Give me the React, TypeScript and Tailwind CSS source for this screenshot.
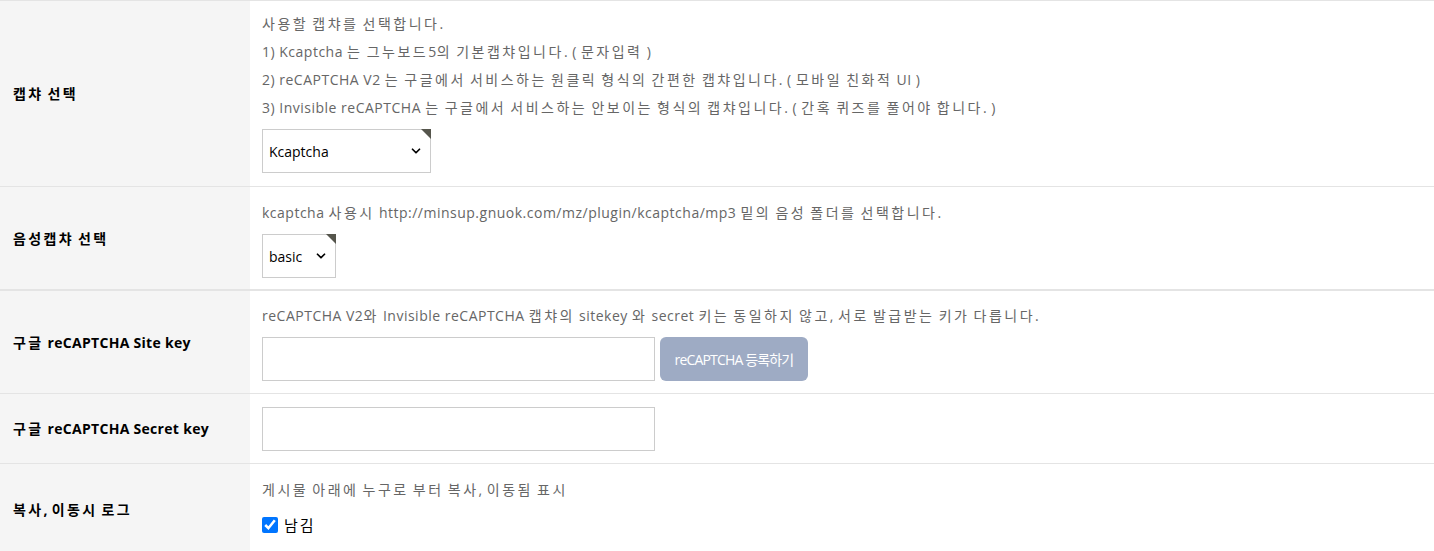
import React from "react";
import { ChevronDown } from "lucide-react";

const font = { fontFamily: '"Open Sans", "Noto Sans CJK KR", sans-serif' };

// hangul runs get their own spacing so the line widths match the original
const Ko = ({ t, hangul, latin = "" }: { t: string; hangul: string; latin?: string }) => (
  <>
    {t.split(/([\uAC00-\uD7A3]+)/).map((s, i) =>
      s ? (
        <span key={i} className={/[\uAC00-\uD7A3]/.test(s) ? hangul : latin}>
          {s}
        </span>
      ) : null
    )}
  </>
);

const Help = ({ t }: { t: string }) => (
  <p className="text-[14px] leading-[28px] text-[#666666]">
    <Ko t={t} hangul="tracking-[2.5px]" latin="tracking-[0.5px]" />
  </p>
);

const Select = ({ value, options, width }: { value: string; options: string[]; width: string }) => (
  <div className={`relative h-[44px] ${width}`}>
    <select
      defaultValue={value}
      className="appearance-none w-full h-full border border-[#cccccc] bg-white pl-[6px] pr-7 text-[14px] text-black outline-none"
    >
      {options.map((o) => (
        <option key={o}>{o}</option>
      ))}
    </select>
    <ChevronDown className="absolute right-[8px] top-[15px] w-[14px] h-[14px] pointer-events-none" strokeWidth={3} />
    <span className="absolute top-0 right-0 w-0 h-0 border-t-[10px] border-l-[10px] border-t-[#55554c] border-l-transparent" />
  </div>
);

const Row = ({
  label,
  children,
  border = "border-b border-[#e4e4e4]",
  className = "",
}: {
  label: string;
  children: React.ReactNode;
  border?: string;
  className?: string;
}) => (
  <div className={`grid grid-cols-[250px_1fr] ${border}`}>
    <div className="bg-[#f5f5f5] flex items-center px-[13px] text-[14px] font-bold text-black">
      <span>
        <Ko t={label} hangul="tracking-[2.4px]" latin="tracking-[0.3px]" />
      </span>
    </div>
    <div className={`px-3 ${className}`}>{children}</div>
  </div>
);

export default function App() {
  return (
    <div className="w-[1434px] h-[551px] overflow-hidden bg-white" style={font}>
      <div className="border-t border-[#e4e4e4]">
        <Row label="캡챠 선택" className="pt-[9px] pb-[13px]">
          <Help t="사용할 캡챠를 선택합니다." />
          <Help t="1) Kcaptcha 는 그누보드5의 기본캡챠입니다. ( 문자입력 )" />
          <Help t="2) reCAPTCHA V2 는 구글에서 서비스하는 원클릭 형식의 간편한 캡챠입니다. ( 모바일 친화적 UI )" />
          <Help t="3) Invisible reCAPTCHA 는 구글에서 서비스하는 안보이는 형식의 캡챠입니다. ( 간혹 퀴즈를 풀어야 합니다. )" />
          <div className="mt-[7px]">
            <Select value="Kcaptcha" options={["Kcaptcha", "reCAPTCHA V2", "Invisible reCAPTCHA"]} width="w-[169px]" />
          </div>
        </Row>
        <Row label="음성캡챠 선택" border="border-b-2 border-[#e4e4e4]" className="pt-[12px] pb-[11px]">
          <Help t="kcaptcha 사용시 http://minsup.gnuok.com/mz/plugin/kcaptcha/mp3 밑의 음성 폴더를 선택합니다." />
          <div className="mt-[7px]">
            <Select value="basic" options={["basic"]} width="w-[74px]" />
          </div>
        </Row>
        <Row label="구글 reCAPTCHA Site key" className="pt-[11px] pb-[12px]">
          <Help t="reCAPTCHA V2와 Invisible reCAPTCHA 캡챠의 sitekey 와 secret 키는 동일하지 않고, 서로 발급받는 키가 다릅니다." />
          <div className="mt-[7px] flex gap-[5px]">
            <input className="w-[393px] h-[44px] border border-[#cccccc] outline-none" />
            <button className="h-[44px] w-[148px] rounded-md bg-[#9eabc4] text-white text-[14px] tracking-[-0.06em]">
              reCAPTCHA 등록하기
            </button>
          </div>
        </Row>
        <Row label="구글 reCAPTCHA Secret key" className="pt-[13px] pb-[12px]">
          <input className="w-[393px] h-[44px] border border-[#cccccc] outline-none block" />
        </Row>
        <Row label="복사, 이동시 로그" border="" className="pt-[12px] pb-[18px]">
          <Help t="게시물 아래에 누구로 부터 복사, 이동됨 표시" />
          <label className="mt-[10px] flex items-center gap-[6px] text-[15px] text-black">
            <input type="checkbox" defaultChecked className="w-[16px] h-[16px] m-0" />
            <span className="tracking-[2px]">남김</span>
          </label>
        </Row>
      </div>
    </div>
  );
}
